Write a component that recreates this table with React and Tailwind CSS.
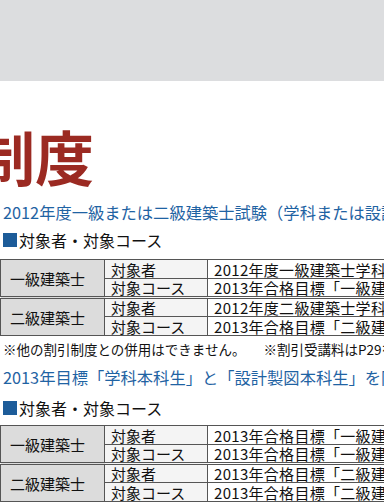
const groups = {
  first: [
    {
      label: '一級建築士',
      rows: [
        ['対象者', '2012年度一級建築士学科試験の受験者'],
        ['対象コース', '2013年合格目標「一級建築士設計製図本科生」'],
      ],
    },
    {
      label: '二級建築士',
      rows: [
        ['対象者', '2012年度二級建築士学科試験の受験者'],
        ['対象コース', '2013年合格目標「二級建築士設計製図本科生」'],
      ],
    },
  ],
  second: [
    {
      label: '一級建築士',
      rows: [
        ['対象者', '2013年合格目標「一級建築士学科本科生」'],
        ['対象コース', '2013年合格目標「一級建築士設計製図本科生」'],
      ],
    },
    {
      label: '二級建築士',
      rows: [
        ['対象者', '2013年合格目標「二級建築士学科本科生」'],
        ['対象コース', '2013年合格目標「二級建築士設計製図本科生」'],
      ],
    },
  ],
};

function CourseTable({ data }) {
  return (
    <table className="border-collapse table-fixed w-[560px] text-[15px] leading-none text-[#111]">
      <colgroup>
        <col className="w-[104px]" />
        <col className="w-[103px]" />
        <col />
      </colgroup>
      <tbody>
        {data.map((group, gi) =>
          group.rows.map((row, ri) => (
            <tr key={group.label + ri} className={`h-[19px] ${gi > 0 && ri === 0 ? 'border-t-[3px] border-double border-[#555]' : ''}`}>
              {ri === 0 && (
                <td rowSpan={2} className="border border-[#555] bg-[#dcdcdc] text-center align-middle p-0 pr-[10px]">
                  {group.label}
                </td>
              )}
              <td className="border border-[#555] bg-[#f4f4f4] pl-[6px] p-0 whitespace-nowrap">{row[0]}</td>
              <td className="border border-[#555] bg-white pl-[6px] p-0 whitespace-nowrap overflow-hidden tracking-[0.3px]">{row[1]}</td>
            </tr>
          ))
        )}
      </tbody>
    </table>
  );
}

function Heading() {
  return (
    <div className="flex items-center h-[32px] pl-[3px] text-[16px] text-[#111]">
      <span className="inline-block w-[14px] h-[14px] bg-[#1d5c99] mr-[2px]" />
      対象者・対象コース
    </div>
  );
}

export default function App() {
  return (
    <div
      className="w-[384px] h-[502px] overflow-hidden bg-white"
      style={{ fontFamily: '"Noto Sans CJK JP", "Noto Sans", sans-serif' }}
    >
      <div className="h-[81px] bg-[#dcdddf]" />

      <div className="h-[45px]" />
      <div className="h-[74px] -ml-[24px] text-[59px] font-bold leading-none text-[#9b2a22] whitespace-nowrap">
        制度
      </div>

      <div className="h-[24px] pl-[3px] text-[16.3px] leading-[24px] text-[#1f63a3] whitespace-nowrap">
        2012年度一級または二級建築士試験（学科または設計製図）の受験者
      </div>
      <Heading />
      <div className="mt-[3px]">
        <CourseTable data={groups.first} />
      </div>
      <div className="flex h-[26px] pl-[3px] text-[13.5px] leading-[26px] text-[#111] whitespace-nowrap">
        <span>※他の割引制度との併用はできません。</span>
        <span className="ml-[18px]">※割引受講料はP29をご覧ください。</span>
      </div>
      <div className="h-[30px] pl-[3px] text-[16.3px] leading-[30px] text-[#1f63a3] whitespace-nowrap">
        2013年目標「学科本科生」と「設計製図本科生」を同時申込
      </div>
      <Heading />
      <div className="mt-[1px]">
        <CourseTable data={groups.second} />
      </div>
    </div>
  );
}
